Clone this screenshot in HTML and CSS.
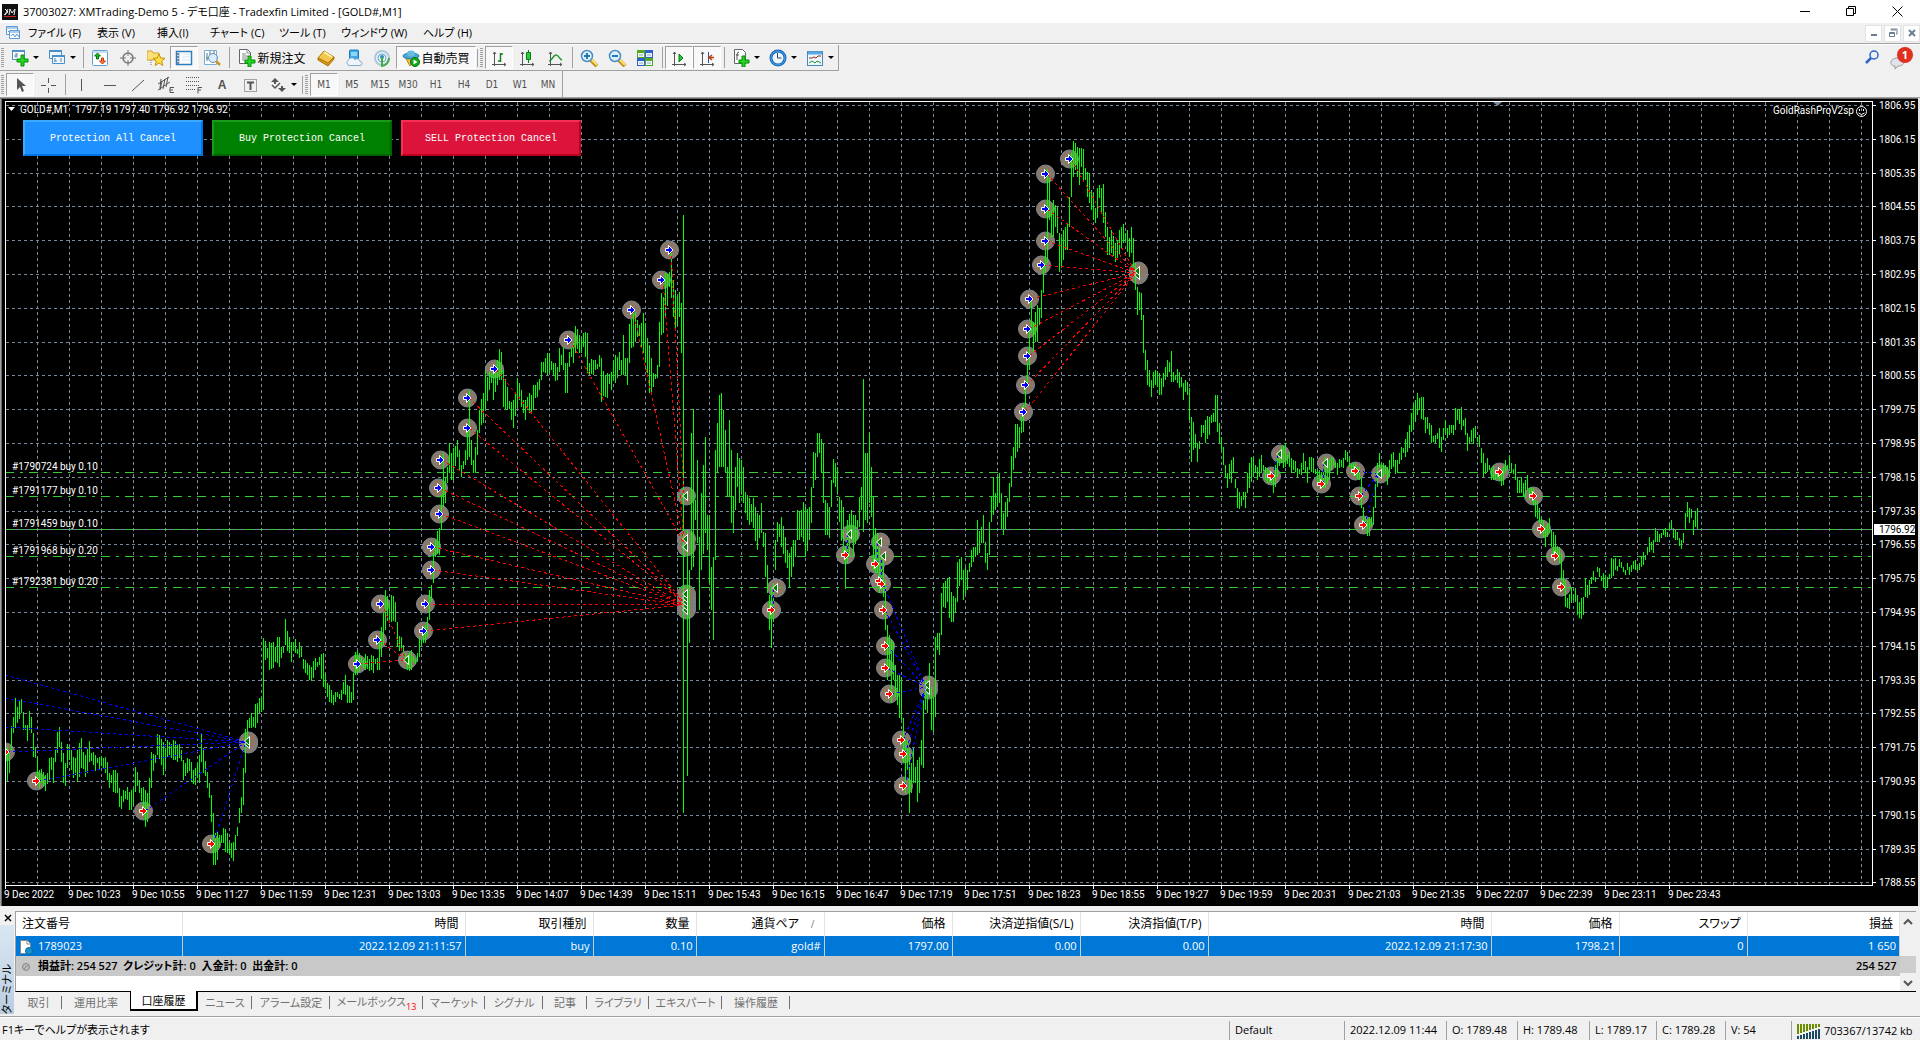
FILE: index.html
```html
<!DOCTYPE html>
<html lang="ja">
<head>
    <meta charset="UTF-8">
    <meta name="viewport" content="width=device-width, initial-scale=1.0">
    <title>37003027: XMTrading-Demo 5 - デモ口座 - Tradexfin Limited - [GOLD#,M1]</title>
    <link rel="stylesheet" href="styles.css">
</head>
<body>
    <header class="title-bar">
        <svg class="app-icon" width="16" height="16"><rect width="16" height="16" fill="#111"/><path d="M3 5l3 3-4 3M6 5L3 11M7 11l1-6 2 4 3-4-1 6" stroke="#eee" fill="none"/><path d="M2 12.500h12" stroke="#c22"/></svg>
        <h1>37003027: XMTrading-Demo 5 - デモ口座 - Tradexfin Limited - [GOLD#,M1]</h1>
        <div class="window-buttons">
            <button aria-label="最小化"><svg width="11" height="11"><path d="M0 5.500h10" stroke="#000"/></svg></button>
            <button aria-label="元に戻す"><svg width="11" height="11"><path d="M.5 2.500h7v7h-7zM2.500 2.500v-2h7v7h-2" stroke="#000" fill="none"/></svg></button>
            <button aria-label="閉じる"><svg width="11" height="11"><path d="M.5.5l10 10M10.500.5l-10 10" stroke="#000"/></svg></button>
        </div>
    </header>

    <nav class="menu-bar">
        <svg class="menu-icon" width="16" height="16" fill="#fff" stroke="#5b9bd5"><path d="M1.500 1.500h11v8h-11z"/><path d="M1 3h12M3 6l2 2 2-3" fill="none"/><path d="M4.500 5.500h10v8h-10z"/><path d="M5 7h9M6 11l2-2 2 3 2-3 2 3" fill="none"/></svg>
        <div class="menu-items">
            <button>ファイル (F)</button>
            <button>表示 (V)</button>
            <button>挿入(I)</button>
            <button>チャート (C)</button>
            <button>ツール (T)</button>
            <button>ウィンドウ (W)</button>
            <button>ヘルプ (H)</button>
        </div>
        <div class="mdi-buttons">
            <button aria-label="チャートを最小化"><svg width="10" height="10"><path d="M2 7h6" stroke="#6b7d90" stroke-width="2"/></svg></button>
            <button aria-label="チャートを元に戻す"><svg width="10" height="10" fill="none" stroke="#6b7d90"><path d="M3 2V1h6v5H8M3 2h5M1.500 4.500h5v4h-5zM1.500 5.500h5"/></svg></button>
            <button aria-label="チャートを閉じる"><svg width="10" height="10"><path d="M2 2l6 6M8 2L2 8" stroke="#6b7d90" stroke-width="2"/></svg></button>
        </div>
    </nav>

    <div class="toolbar-area">
        <div class="toolbar-rows">
            <div class="toolbar">
                <span class="handle"></span>
                <button class="tool drop" aria-label="新規チャート"><svg width="18" height="18"><path d="M1.500 1.500h12v9h-12z" fill="#fff" stroke="#4a90c8"/><path d="M1 2h13" stroke="#4a90c8" stroke-width="2"/><path d="M5 4v5M3 7h4M5 5h2" stroke="#68a" fill="none"/><path d="M10 6h3v4h4v3h-4v4h-3v-4H6v-3h4z" fill="#21d821" stroke="#088a08"/></svg></button>
                <button class="tool drop" aria-label="組表示"><svg width="18" height="18" fill="#eef6fd" stroke="#4a90c8"><path d="M1.500 1.500h12v8h-12z"/><path d="M1 2h13" stroke-width="2"/><path d="M4.500 6.500h12v8h-12z"/><path d="M4 7h13" stroke-width="2"/><path d="M7 9v4M6 12h3M13 9v4" stroke="#68a"/></svg></button>
                <span class="sep"></span>
                <button class="tool" aria-label="気配値表示"><svg width="18" height="18"><rect x="1.500" y="1.500" width="15" height="15" rx="1" fill="#fff" stroke="#5aa0d0"/><path d="M1 3h16" stroke="#8ec2e8"/><path d="M6.500 4l3 3h-2v3h-2V7h-2z" fill="#25b625" stroke="#07770b"/><path d="M11.500 15l-3-3h2V9h2v3h2z" fill="#ff783d" stroke="#c53b0b"/></svg></button>
                <button class="tool" aria-label="データウィンドウ"><svg width="18" height="18" fill="none" stroke="#777"><circle cx="9" cy="9" r="5" stroke-width="1.500"/><path d="M9 1v6M9 11v6M1 9h6M11 9h6"/></svg></button>
                <button class="tool" aria-label="ナビゲーター"><svg width="18" height="18"><path d="M0 2h5l1 2h6v7H0z" fill="#fbe078" stroke="#d0a42c"/><path d="M4 11v6" stroke="#777" stroke-dasharray="1 1"/><path d="M12 5l1.700 4 4.300.3-3.300 2.700 1.100 4.500L12 14l-3.800 2.500L9.300 12 6 9.300l4.300-.3z" fill="#ffdf45" stroke="#c79308"/></svg></button>
                <button class="tool pressed" aria-label="ターミナル"><svg width="18" height="18"><rect x="1.500" y="2.500" width="15" height="13" fill="#fff" stroke="#2f7cba" stroke-width="1.500"/><path d="M2 3h3v12H2z" fill="#bdd9f0"/><path d="M3 4v11" stroke="#333" stroke-dasharray="2 1"/><path d="M7 5h8M7 8h8M7 11h8" stroke="#d4e6f3"/></svg></button>
                <button class="tool" aria-label="ストラテジーテスター"><svg width="18" height="18"><path d="M1.500 1.500h12v14h-12z" fill="#fff" stroke="#78add5"/><path d="M4 4v8M7 2v4M11 2v4M3 9h2" stroke="#578"/><circle cx="10" cy="9" r="4.500" fill="#cfe9fbcc" stroke="#6292bd"/><path d="M13 12l4 4" stroke="#c99b24" stroke-width="2.500"/></svg></button>
                <span class="sep"></span>
                <button class="tool wide order"><svg width="18" height="18"><path d="M1.500.5h8l3 3v11h-11z" fill="#fff" stroke="#666"/><path d="M9 1v3h3M4 5h4M4 7h6M4 9h5M4 11h3" stroke="#888" fill="none"/><path d="M10 7h3v4h4v3h-4v4h-3v-4H7v-3h3z" fill="#21d821" stroke="#088a08"/></svg>新規注文</button>
                <button class="tool" aria-label="MetaEditor"><svg width="18" height="18"><path d="M1 9l6-7 10 6-6 8z" fill="#f4c64b" stroke="#a87508"/><path d="M1 9l10 5 6-6v2l-6 7-10-6z" fill="#d8951d" stroke="#a87508"/><path d="M7 3l8 5" stroke="#fff2ad" stroke-width="2"/></svg></button>
                <button class="tool" aria-label="MQL5.community"><svg width="18" height="18"><rect x="4.500" y="1" width="9" height="9" rx="1" fill="#39a9e9" stroke="#1c7db9"/><path d="M6 3h6v4H6z" fill="#8ed6f8"/><path d="M4 16.500a3 3 0 01-1-5 4 4 0 017-1 3 3 0 015 2 2 2 0 010 4z" fill="#edf6fd" stroke="#87a9c6"/></svg></button>
                <button class="tool" aria-label="シグナル"><svg width="18" height="18" fill="none"><circle cx="9" cy="9" r="7" stroke="#a9c9df" stroke-width="2"/><circle cx="9" cy="9" r="4" stroke="#58abd1"/><circle cx="9" cy="8" r="2" fill="#268bcc"/><path d="M9 8v9a8 8 0 007-8" stroke="#43ac46" stroke-width="2"/></svg></button>
                <button class="tool wide pressed"><svg width="18" height="18"><path d="M3 8h12l-7 9z" fill="#f3c436" stroke="#b58716"/><ellipse cx="9" cy="7" rx="8" ry="3" fill="#4ba6d7" stroke="#2c7ba6"/><ellipse cx="9" cy="4.500" rx="4" ry="3" fill="#68bce2"/><circle cx="13" cy="13" r="4.500" fill="#13a91b" stroke="#087410"/><path d="M11.500 10.500v5l4-2.500z" fill="#fff"/></svg>自動売買</button>
                <span class="handle next"></span>
                <button class="tool pressed" aria-label="バーチャート"><svg width="18" height="18" fill="none" stroke="#555"><path d="M4.500 3v14M2 15.500h14M3 5l1.500-2L6 5M14 14l2 1.500-2 1.500"/><path d="M10.500 4v9M8 12h2M11 5h2" stroke="#14821b" stroke-width="1.500"/></svg></button>
                <button class="tool" aria-label="ローソク足"><svg width="18" height="18" fill="none" stroke="#555"><path d="M4.500 3v14M2 15.500h14M3 5l1.500-2L6 5M14 14l2 1.500-2 1.500"/><path d="M10.500 1v13" stroke="#087a16"/><path d="M8.500 3.500h4v7h-4z" fill="#29ce35" stroke="#087a16"/></svg></button>
                <button class="tool" aria-label="ラインチャート"><svg width="18" height="18" fill="none" stroke="#555"><path d="M4.500 3v14M2 15.500h14M3 5l1.500-2L6 5M14 14l2 1.500-2 1.500"/><path d="M3 12c3 0 4-6 7-6 3 0 3 4 6 5" stroke="#269a31" stroke-width="1.500"/></svg></button>
                <span class="sep"></span>
                <button class="tool" aria-label="拡大"><svg width="18" height="18"><path d="M11 11l6 6" stroke="#bf8b1b" stroke-width="4"/><path d="M11 10l6 6" stroke="#ffe66e" stroke-width="2"/><circle cx="7" cy="7" r="5.500" fill="#daf1ff" stroke="#4a8cc4" stroke-width="1.500"/><path d="M4 7h6M7 4v6" stroke="#2877ac" stroke-width="2"/></svg></button>
                <button class="tool" aria-label="縮小"><svg width="18" height="18"><path d="M11 11l6 6" stroke="#bf8b1b" stroke-width="4"/><path d="M11 10l6 6" stroke="#ffe66e" stroke-width="2"/><circle cx="7" cy="7" r="5.500" fill="#daf1ff" stroke="#4a8cc4" stroke-width="1.500"/><path d="M4 7h6" stroke="#2877ac" stroke-width="2"/></svg></button>
                <button class="tool" aria-label="整列"><svg width="18" height="18"><path d="M1 1h8v8H1zM9 9h8v8H9z" fill="#55a91d"/><path d="M9 1h8v8H9zM1 9h8v8H1z" fill="#2c60d0"/><path d="M2 4h6v4H2zM10 4h6v4h-6zM2 12h6v4H2zM10 12h6v4h-6z" fill="#eef5ff"/><path d="M3 6h4M11 6h4M3 14h4M11 14h4" stroke="#8ab"/></svg></button>
                <span class="sep"></span>
                <button class="tool pressed" aria-label="自動スクロール"><svg width="18" height="18" fill="none" stroke="#555"><path d="M4.500 3v14M2 15.500h14M3 5l1.500-2L6 5M14 14l2 1.500-2 1.500"/><path d="M9 5v8l4-4z" fill="#1ec72b" stroke="#087a16"/></svg></button>
                <button class="tool pressed" aria-label="チャートシフト"><svg width="18" height="18" fill="none" stroke="#555"><path d="M4.500 3v14M2 15.500h14M3 5l1.500-2L6 5M14 14l2 1.500-2 1.500"/><path d="M10.500 3v11" stroke="#1d58a8"/><path d="M16 8.500h-4M14 6l-3 2.500 3 2.500" stroke="#c33e0d" stroke-width="1.500"/></svg></button>
                <span class="sep"></span>
                <button class="tool drop" aria-label="インディケータ"><svg width="18" height="18"><path d="M2.500.5h8l3 3v11h-11z" fill="#fff" stroke="#666"/><path d="M7 3q-2 0-2 3v5M4 6h3" stroke="#555" fill="none"/><path d="M10 7h3v4h4v3h-4v4h-3v-4H7v-3h3z" fill="#21d821" stroke="#088a08"/></svg></button>
                <button class="tool drop" aria-label="時間足設定"><svg width="18" height="18"><circle cx="9" cy="9" r="7" fill="#edf7ff" stroke="#1765b5" stroke-width="3"/><circle cx="9" cy="9" r="7" fill="none" stroke="#48a8ea"/><path d="M8.500 4v5h4" stroke="#345" fill="none"/></svg></button>
                <button class="tool drop" aria-label="定型チャート"><svg width="18" height="18"><rect x="1.500" y="2.500" width="15" height="14" fill="#eef7ff" stroke="#4887ba"/><path d="M2 4h14" stroke="#5ca7e1" stroke-width="3"/><path d="M3 9h3l2-1 2 1 2-2h3" stroke="#962e0a" fill="none"/><path d="M3 14l3-2 3 2 2-2 2 1 2 1" stroke="#279230" fill="none"/></svg></button>
            </div>
            <div class="toolbar drawing">
                <span class="handle"></span>
                <button class="tool pressed" aria-label="カーソル"><svg width="18" height="18"><path d="M6 2v12l3-3 2 5 2-1-2-5h4z" fill="#555"/></svg></button>
                <button class="tool" aria-label="クロスヘア"><svg width="18" height="18"><path d="M9.500 2v5M9.500 12v5M2 9.500h5M12 9.500h5" stroke="#555"/></svg></button>
                <span class="sep"></span>
                <button class="tool" aria-label="垂直線"><svg width="18" height="18"><path d="M8.500 3v12" stroke="#555"/></svg></button>
                <button class="tool" aria-label="水平線"><svg width="18" height="18"><path d="M3 9.500h12" stroke="#555"/></svg></button>
                <button class="tool" aria-label="トレンドライン"><svg width="18" height="18"><path d="M3 15L15 4" stroke="#555"/></svg></button>
                <button class="tool" aria-label="等間隔チャネル"><svg width="18" height="18" fill="none" stroke="#555"><path d="M1 8L12 1M1 14L13 6M5 5L3 14M8 3L6 13M11 1l-2 10M4 3l-1 9"/><path d="M17 11.500h-4v5h4M13 14h3"/></svg></button>
                <button class="tool" aria-label="フィボナッチ"><svg width="18" height="18" fill="none" stroke="#555"><path d="M1 1.500h14M1 5.500h14M1 9.500h14M1 13.500h9" stroke-dasharray="1 1"/><path d="M17 11.500h-4v6M13 14h3"/></svg></button>
                <button class="tool letter">A</button>
                <button class="tool" aria-label="テキストラベル"><svg width="18" height="18" fill="none" stroke="#555"><rect x="3.500" y="3.500" width="12" height="12" stroke-dasharray="1 1"/><path d="M6 6.500h7M9.500 6v8" stroke-width="2"/></svg></button>
                <button class="tool drop" aria-label="矢印"><svg width="18" height="18" fill="#555"><path d="M6 2l4 4H7v2H5V6H2zM13 16l-4-4h3v-2h2v2h3z"/><path d="M3 9l3 3 5-5" fill="none" stroke="#555" stroke-width="1.500"/></svg></button>
                <span class="handle next"></span>
                <button class="tool time pressed">M1</button>
                <button class="tool time">M5</button>
                <button class="tool time">M15</button>
                <button class="tool time">M30</button>
                <button class="tool time">H1</button>
                <button class="tool time">H4</button>
                <button class="tool time">D1</button>
                <button class="tool time">W1</button>
                <button class="tool time">MN</button>
            </div>
        </div>
        <div class="toolbar-right">
            <button aria-label="検索"><svg width="15" height="15" fill="none" stroke="#2c65c7"><circle cx="9" cy="5" r="4" stroke-width="1.500"/><path d="M6 8l-5 5" stroke-width="2.500"/></svg></button>
            <button class="notice" aria-label="通知"><svg width="16" height="14"><path d="M8 2c-9 0-9 8-3 8v3l3-3c8 0 8-8 0-8z" fill="#dfe3ea" stroke="#999"/></svg><span class="badge">1</span></button>
        </div>
    </div>

    <main class="chart">
        <svg id="chart" viewBox="0 98 1920 808" preserveAspectRatio="xMinYMin meet"></svg>
        <div class="chart-buttons">
            <button class="all">Protection All Cancel</button>
            <button class="buy">Buy Protection Cancel</button>
            <button class="sell">SELL Protection Cancel</button>
        </div>
    </main>

    <section class="terminal">
        <div class="terminal-side">
            <button aria-label="ターミナルを閉じる"><svg width="8" height="8"><path d="M1 1l6 6M7 1L1 7" stroke="#000" stroke-width="1.500"/></svg></button>
            <div class="terminal-name"><span>ターミナル</span></div>
        </div>
        <div class="terminal-main">
            <div class="history">
                <table>
                    <colgroup>
                        <col class="c-order"><col class="c-time"><col class="c-val"><col class="c-lot"><col class="c-val"><col class="c-val">
                        <col class="c-val"><col class="c-val"><col class="c-time"><col class="c-val"><col class="c-val"><col>
                    </colgroup>
                    <thead>
                        <tr>
                            <th>注文番号</th><th>時間</th><th>取引種別</th><th>数量</th><th>通貨ペア<span class="sort">/</span></th><th>価格</th>
                            <th>決済逆指値(S/L)</th><th>決済指値(T/P)</th><th>時間</th><th>価格</th><th>スワップ</th><th>損益</th>
                        </tr>
                    </thead>
                    <tbody>
                        <tr class="selected">
                            <td><svg width="14" height="16"><path d="M1.500 1.500h7l3 3v10h-10z" fill="#fff" stroke="#888"/><path d="M8 1v4h4" fill="none" stroke="#888"/><circle cx="10" cy="12" r="3.500" fill="#1992d1" stroke="#0a6699"/></svg>1789023</td>
                            <td>2022.12.09 21:11:57</td><td>buy</td><td>0.10</td><td>gold#</td><td>1797.00</td>
                            <td>0.00</td><td>0.00</td><td>2022.12.09 21:17:30</td><td>1798.21</td><td>0</td><td>1 650</td>
                        </tr>
                        <tr class="total">
                            <td colspan="11"><svg width="14" height="16"><circle cx="7" cy="8" r="3.500" fill="#bbb" stroke="#888"/><path d="M5 10l4-4" stroke="#888"/></svg>損益計: 254 527&nbsp; クレジット計: 0&nbsp; 入金計: 0&nbsp; 出金計: 0</td>
                            <td>254 527</td>
                        </tr>
                    </tbody>
                </table>
                <div class="scrollbar">
                    <svg width="10" height="8"><path d="M1 6l4-4 4 4" fill="none" stroke="#555" stroke-width="2"/></svg>
                    <div class="thumb"></div>
                    <svg width="10" height="8"><path d="M1 2l4 4 4-4" fill="none" stroke="#555" stroke-width="2"/></svg>
                </div>
            </div>
            <div class="tabs">
                <button>取引</button>
                <button>運用比率</button>
                <button class="active">口座履歴</button>
                <button>ニュース</button>
                <button>アラーム設定</button>
                <button>メールボックス<span class="count">13</span></button>
                <button>マーケット</button>
                <button>シグナル</button>
                <button>記事</button>
                <button>ライブラリ</button>
                <button>エキスパート</button>
                <button>操作履歴</button>
            </div>
        </div>
    </section>

    <footer class="status-bar">
        <span class="help">F1キーでヘルプが表示されます</span>
        <span>Default</span>
        <span>2022.12.09 11:44</span>
        <span>O: 1789.48</span>
        <span>H: 1789.48</span>
        <span>L: 1789.17</span>
        <span>C: 1789.28</span>
        <span>V: 54</span>
        <span class="net"><svg width="24" height="16"><path d="M1 1v10M4 1v9M7 1v8M10 1v7M13 1v6M16 1v5M19 1v4M22 1v3" stroke="#6b8e00" stroke-width="2"/><path d="M1 13v3M4 12v4M7 11v5M10 10v6M13 9v7M16 8v8M19 7v9M22 6v10" stroke="#1b4a63" stroke-width="2"/></svg>703367/13742 kb</span>
    </footer>

    <script src="chart.js"></script>
</body>
</html>
```
FILE: styles.css
```css
* {
    box-sizing: border-box;
}

body {
    margin: 0;
    height: 100vh;
    display: flex;
    flex-direction: column;
    overflow: hidden;
    background-color: #f0f0f0;
    color: #000;
    font-family: "Open Sans", "Noto Sans CJK JP", sans-serif;
    font-size: 11px;
    font-feature-settings: "palt";
}

button {
    margin: 0;
    padding: 0;
    border: none;
    background: none;
    color: inherit;
    font: inherit;
    font-feature-settings: inherit;
    white-space: nowrap;
}

svg {
    display: block;
    flex: none;
}

/* title and menu */
.title-bar {
    display: flex;
    align-items: center;
    height: 23px;
    padding-left: 2px;
    background-color: #fff;
}

.title-bar h1 {
    flex: 1;
    margin: 0 0 0 5px;
    font-size: 11px;
    font-weight: normal;
    line-height: 22px;
}

.window-buttons {
    display: flex;
}

.window-buttons button {
    display: flex;
    justify-content: center;
    align-items: center;
    width: 46px;
    height: 20px;
}

.menu-bar {
    display: flex;
    align-items: center;
    height: 21px;
    padding-left: 5px;
    border-bottom: 1px solid #a0a0a0;
}

.menu-items {
    display: grid;
    flex: 1;
    grid-template-columns: 69px 60px 53px 69px 62px 82px 60px;
    margin-left: 7px;
    font-size: 11px;
    line-height: 18px;
}

.menu-items button {
    text-align: left;
}

.mdi-buttons {
    display: flex;
    gap: 2px;
}

.mdi-buttons button {
    display: flex;
    justify-content: center;
    align-items: center;
    width: 17px;
    height: 17px;
    border: 1px solid #e3e3e3;
    background-color: #fff;
}

/* toolbars */
.toolbar-area {
    display: flex;
    justify-content: space-between;
    height: 54px;
    border-top: 1px solid #fff;
    border-bottom: 1px solid #a0a0a0;
}

.toolbar-rows {
    display: flex;
    flex-direction: column;
    align-items: flex-start;
}

.toolbar {
    display: flex;
    align-items: center;
    height: 26px;
    padding-left: 1px;
    border-right: 1px solid #a0a0a0;
    border-bottom: 1px solid #a0a0a0;
}

.toolbar.drawing {
    padding-top: 1px;
    border-bottom: none;
}

.handle {
    width: 3px;
    height: 20px;
    margin: 0 2px 0 0;
    background: repeating-linear-gradient(#a0a0a0 0 1px, #f0f0f0 1px 2px);
}

.handle.next {
    margin: 0 2px 0 4px;
    box-shadow: -4px 0 0 -1px #a0a0a0;
}

.sep {
    width: 1px;
    height: 21px;
    margin: 0 2px 0 3px;
    background-color: #a0a0a0;
}

.tool {
    display: flex;
    justify-content: center;
    align-items: center;
    width: 28px;
    height: 23px;
    border: 1px solid transparent;
    color: #505050;
}

.tool.drop {
    justify-content: flex-start;
    gap: 4px;
    width: 37px;
    padding-left: 4px;
}

.tool.drop::after {
    content: "";
    border: 3px solid transparent;
    border-top-color: #000;
    border-bottom: none;
}

.tool.wide {
    gap: 1px;
    width: 80px;
    color: #000;
    font-family: "Noto Sans CJK JP", sans-serif;
    font-size: 12px;
}

.tool.pressed {
    border-color: #a0a0a0 #fff #fff #a0a0a0;
    background-color: #f8f8f8;
}

.tool.letter {
    font-family: "Liberation Sans", sans-serif;
    font-size: 12px;
    font-weight: bold;
}

.tool.time {
    font-family: "DejaVu Sans Condensed", "DejaVu Sans", sans-serif;
    font-size: 10px;
}

.toolbar-right {
    display: flex;
    align-items: flex-start;
    gap: 10px;
    padding: 5px 7px 0 0;
}

.notice {
    position: relative;
    width: 23px;
    padding-top: 6px;
}

.badge {
    position: absolute;
    top: -3px;
    right: 0;
    width: 16px;
    height: 16px;
    border-radius: 8px;
    background-color: #e0301e;
    color: #fff;
    font-weight: bold;
    line-height: 16px;
}

/* chart */
.chart {
    position: relative;
    flex: 1;
    min-height: 0;
    background-color: #000;
    border-right: 2px solid #e3e3e3;
}

.chart svg {
    width: 100vw;
    height: 100%;
    font-family: "Roboto", sans-serif;
    font-size: 10px;
    fill: #fff;
}

.chart-buttons {
    position: absolute;
    top: 22px;
    left: 23px;
    display: flex;
    gap: 9px;
}

.chart-buttons button {
    width: 180px;
    height: 36px;
    border: 2px solid;
    color: #fff;
    font-family: "Liberation Mono", monospace;
    font-size: 10px;
}

.chart-buttons .all {
    background-color: #1e90ff;
    border-color: #3ba9ff #0074e6 #0074e6 #3ba9ff;
}

.chart-buttons .buy {
    background-color: #008000;
    border-color: #1b991b #006400 #006400 #1b991b;
}

.chart-buttons .sell {
    background-color: #dc143c;
    border-color: #f73055 #bd0020 #bd0020 #f73055;
}

/* terminal */
.terminal {
    display: flex;
    height: 111px;
    padding: 5px 4px 0 0;
    border-bottom: 1px solid #a0a0a0;
}

.terminal-side {
    display: flex;
    flex-direction: column;
    width: 15px;
}

.terminal-side button {
    display: flex;
    justify-content: center;
    align-items: center;
    height: 14px;
}

.terminal-name {
    display: flex;
    flex: 1;
    justify-content: center;
    align-items: flex-end;
    width: 14px;
    margin-bottom: 2px;
    background: linear-gradient(#d9e7f3, #b9cde0);
}

.terminal-name span {
    writing-mode: vertical-rl;
    text-orientation: sideways;
    transform: rotate(180deg);
    line-height: 14px;
}

.terminal-main {
    flex: 1;
    min-width: 0;
}

.history {
    display: flex;
    height: 81px;
    border-top: 1px solid #a0a0a0;
    border-left: 1px solid #a0a0a0;
    border-bottom: 1px solid #000;
    background-color: #fff;
}

.history table {
    flex: 1;
    width: 0;
    height: 64px;
    table-layout: fixed;
    border-collapse: collapse;
}

.c-order { width: 166px; }
.c-time { width: 283px; }
.c-val { width: 128px; }
.c-lot { width: 103px; }

.history th,
.history td {
    height: 20px;
    padding: 0 3px;
    text-align: right;
    line-height: 18px;
    white-space: nowrap;
}

.history th {
    height: 24px;
    padding-right: 6px;
    border-right: 1px solid #e3e3e3;
    font-size: 12px;
    font-weight: normal;
}

.history th:first-child {
    padding-left: 6px;
    text-align: left;
}

.history td:first-child {
    text-align: left;
}

.history td svg {
    display: inline-block;
    margin-right: 5px;
    vertical-align: middle;
}

.sort {
    margin: 0 3px 0 12px;
    color: #808080;
    font-size: 10px;
}

.selected {
    background-color: #0078d7;
    color: #fff;
}

.selected td {
    border-right: 1px solid #ccc;
}

.total {
    background-color: #c8c8c8;
    font-weight: 600;
}

.scrollbar {
    display: flex;
    flex-direction: column;
    justify-content: space-between;
    align-items: center;
    width: 16px;
    padding: 6px 0 4px;
    background-color: #f0f0f0;
}

.scrollbar .thumb {
    width: 16px;
    height: 17px;
    margin-top: 24px;
    background-color: #cdcdcd;
}

.tabs {
    display: grid;
    grid-template-columns: 47px 68px 68px 54px 78px 93px 62px 58px 44px 62px 73px 68px;
    color: #707070;
}

.tabs button {
    position: relative;
    height: 20px;
    line-height: 17px;
    vertical-align: top;
}

.tabs button::after {
    content: "";
    position: absolute;
    top: 4px;
    right: 0;
    height: 13px;
    border-right: 1px solid #707070;
}

.tabs button:nth-child(2)::after,
.tabs .active::after {
    display: none;
}

.tabs .active {
    margin-top: -1px;
    border: 1px solid #000;
    border-top: none;
    border-right-width: 2px;
    border-bottom-width: 2px;
    background-color: #fff;
    color: #000;
}

.tabs .count {
    position: relative;
    top: 4px;
    color: #f00;
    font-size: 9px;
}

/* status */
.status-bar {
    display: grid;
    grid-template-columns: 1fr 115px 102px 71px 72px 67px 69px 66px 129px;
    align-items: end;
    height: 23px;
    border-top: 1px solid #fff;
    line-height: 18px;
}

.status-bar span {
    height: 19px;
    padding-left: 5px;
    border-left: 1px solid #a0a0a0;
    white-space: nowrap;
}

.status-bar .help {
    padding-left: 2px;
    border-left: none;
}

.status-bar .net {
    display: flex;
    align-items: center;
    gap: 3px;
}
```
FILE: chart.js
```javascript
const NS = 'http://www.w3.org/2000/svg';
const chart = document.getElementById('chart');

// x, high, low of the price bars, gaps are filled in by drawBars()
const prices = `5,733,762 7,747,781 9,753,773 11,726,750 13,717,733 15,698,728 17,707,723 21,699,713 23,712,730 27,725,741
29,711,730 31,717,733 33,733,757 35,747,758 37,757,780 39,770,788 45,775,791 49,758,780 51,757,770 53,758,783
55,750,762 57,732,753 59,727,747 61,742,762 63,753,783 65,763,786 67,744,768 69,747,760 73,757,778 77,750,782
81,738,768 85,755,777 89,741,762 93,752,765 99,757,770 105,757,773 109,773,788 113,770,792 117,773,793 119,788,807
123,790,802 127,787,800 129,792,810 133,788,805 135,767,792 139,780,793 143,787,808 145,790,827 147,793,822 151,752,788
155,755,763 157,734,755 161,739,765 163,742,775 167,740,757 173,740,760 179,744,758 183,760,780 187,758,773 191,762,782
195,768,785 199,755,783 201,733,762 203,748,773 207,772,788 209,783,798 211,795,822 213,813,865 215,833,865 219,835,848
223,828,843 227,833,853 231,843,858 233,842,861 235,835,850 239,808,823 241,797,813 243,768,805 245,729,773 247,720,740
251,713,728 257,703,723 259,698,713 261,698,712 263,638,710 265,641,660 269,642,670 273,642,668 279,637,667 283,647,653
285,619,645 289,637,653 291,642,662 295,639,653 301,647,657 305,660,673 309,665,680 311,667,681 315,658,670 319,657,665
323,653,687 327,683,697 329,685,702 335,692,702 341,690,700 345,675,695 347,685,703 351,692,703 353,673,700 355,652,675
359,653,672 365,654,670 371,655,670 377,658,670 379,640,670 381,627,657 385,590,630 389,603,622 391,595,622 395,602,622
397,622,647 401,637,648 407,657,670 411,650,670 417,653,662 419,637,657 423,630,643 427,617,637 429,590,620 431,585,602
433,553,583 435,540,557 439,528,555 441,495,530 443,453,507 445,477,503 447,467,483 449,443,473 453,448,480 457,440,457
461,465,477 465,450,465 467,427,460 469,390,457 471,440,465 473,460,473 475,447,473 477,430,455 479,410,433 483,393,423
485,370,410 489,372,390 491,373,383 493,372,400 495,373,392 499,349,380 501,352,380 503,370,407 507,387,410 511,402,420
513,400,428 517,378,408 521,390,407 525,400,420 529,393,413 533,385,410 537,382,397 541,362,380 545,358,373 549,353,373
553,363,375 557,367,380 559,348,372 563,347,370 565,363,393 567,363,393 569,352,367 573,343,363 575,326,353 579,335,353
583,333,347 587,333,373 589,363,375 595,360,370 599,355,367 601,358,402 605,375,397 611,372,390 615,355,383 619,352,370
621,360,375 623,335,375 625,358,375 627,358,385 629,324,363 633,310,347 637,320,337 641,323,347 643,313,353 645,323,363
649,345,393 653,373,387 657,365,378 659,322,367 661,293,335 663,297,333 665,273,317 669,272,287 671,250,298 673,280,317
675,290,330 679,292,317 681,303,353 683,215,813 685,0,0 687,530,776 689,570,643 691,433,570 693,409,567 695,500,520
697,460,543 699,537,610 701,493,570 705,437,533 707,515,550 709,515,583 711,567,610 713,557,640 715,450,560 717,423,473
719,395,467 721,393,467 723,410,467 725,430,473 727,467,497 729,420,497 731,450,523 733,497,533 735,467,510 737,453,487
739,458,503 741,460,493 743,467,503 745,492,513 749,498,525 753,498,528 757,513,550 761,503,533 763,532,547 765,533,577
767,565,593 769,595,630 771,587,648 773,583,622 775,540,570 777,522,542 781,517,547 785,537,563 789,553,587 793,540,567
795,540,557 797,510,540 801,510,537 803,502,542 805,507,557 809,507,540 811,487,523 813,452,488 815,453,480 817,433,457
819,433,453 823,443,503 825,500,535 829,507,538 831,480,507 833,459,483 837,467,493 839,497,522 843,507,553 845,547,589
847,520,563 851,510,540 853,515,557 857,520,540 859,497,527 861,487,510 863,379,532 865,453,520 867,453,523 869,433,503
871,467,517 873,497,570 875,528,573 877,533,573 879,547,593 883,560,597 885,580,630 887,625,680 889,635,668 891,640,703
893,642,680 895,665,697 899,675,718 901,677,720 903,718,762 905,740,793 907,740,770 909,748,813 911,763,793 913,748,783
915,767,783 917,760,802 919,757,793 921,740,765 923,700,768 925,680,710 927,680,713 929,663,697 931,687,730 933,697,732
935,637,717 937,633,650 939,633,655 941,593,635 943,583,607 947,578,602 949,577,618 951,592,622 955,598,613 957,562,602
961,557,580 963,570,600 967,570,590 971,550,567 975,547,557 977,520,555 981,527,543 983,515,543 985,542,563 987,553,570
989,522,555 991,497,522 993,477,515 995,493,510 997,477,507 999,473,503 1001,493,530 1003,513,535 1005,502,530 1009,483,502
1011,456,487 1013,447,470 1015,424,458 1019,427,448 1021,417,433 1023,405,432 1025,383,407 1027,363,385 1029,330,370 1031,298,333
1033,322,352 1035,312,342 1037,305,342 1039,308,325 1041,290,318 1043,267,293 1045,250,273 1047,169,263 1049,178,220 1051,210,238
1053,200,237 1055,205,227 1057,207,233 1059,233,272 1061,237,268 1063,230,260 1065,227,250 1067,223,250 1069,197,227 1071,153,197
1073,141,177 1075,143,170 1077,147,177 1079,148,185 1081,148,167 1083,149,180 1085,168,180 1087,172,197 1089,173,203 1091,190,210
1093,193,220 1095,208,223 1097,188,218 1099,185,198 1103,184,223 1105,212,237 1107,227,255 1109,237,255 1111,230,253 1115,243,262
1117,240,258 1119,230,255 1123,224,243 1127,230,252 1129,238,257 1131,227,253 1133,238,267 1135,263,290 1137,287,315 1139,292,310
1141,293,320 1143,315,353 1145,350,370 1147,360,385 1149,370,387 1151,380,397 1153,372,388 1155,370,385 1159,373,395 1163,373,387
1167,360,377 1171,351,382 1173,372,382 1177,369,383 1181,377,387 1183,383,400 1187,382,395 1189,388,420 1191,417,462 1193,422,450
1197,443,462 1201,425,437 1205,420,443 1209,417,435 1211,415,423 1213,413,422 1215,395,422 1217,395,432 1219,423,443 1221,437,450
1223,447,465 1225,465,478 1227,473,488 1231,460,483 1233,457,473 1237,488,508 1239,492,509 1243,492,500 1245,492,508 1247,473,493
1249,463,488 1253,457,477 1257,467,480 1261,455,473 1265,467,480 1269,470,483 1273,473,493 1277,457,477 1281,447,463 1285,443,467
1289,452,467 1293,460,470 1297,468,477 1301,463,475 1303,453,470 1307,467,483 1309,457,470 1313,458,473 1317,470,483 1323,470,488
1325,457,488 1331,457,470 1337,463,475 1341,460,467 1345,450,460 1349,457,467 1353,463,475 1359,467,480 1361,477,508 1363,507,523
1367,520,536 1371,517,527 1373,507,525 1375,483,508 1377,463,487 1379,453,468 1383,463,477 1387,467,485 1389,460,477 1393,452,467
1397,460,472 1401,447,460 1405,439,457 1409,425,448 1411,413,432 1415,400,422 1417,393,415 1419,398,410 1423,397,420 1425,417,433
1429,423,435 1431,425,443 1435,435,443 1439,428,448 1441,437,452 1445,420,433 1449,425,435 1453,425,435 1455,408,430 1457,409,420
1461,407,430 1465,418,435 1467,433,451 1471,430,442 1475,426,438 1479,435,447 1481,448,463 1483,453,477 1487,458,472 1491,468,480
1495,470,480 1501,472,486 1503,467,485 1505,460,473 1509,455,468 1511,463,473 1515,464,480 1517,477,493 1521,477,493 1523,483,497
1527,475,490 1529,488,500 1533,488,505 1535,500,517 1539,508,523 1543,520,537 1545,527,547 1549,518,533 1551,530,547 1555,535,560
1559,547,563 1561,553,580 1563,570,590 1565,580,607 1567,598,608 1571,587,603 1575,588,602 1577,595,615 1581,598,619 1583,597,615
1585,578,597 1589,580,595 1593,571,580 1599,568,577 1603,573,588 1607,577,588 1611,558,578 1615,558,570 1621,562,568 1627,563,570
1631,565,572 1635,560,570 1639,563,570 1643,552,565 1647,547,555 1649,537,552 1653,540,553 1655,528,542 1661,533,538 1665,528,537
1669,525,530 1671,520,530 1675,530,540 1679,538,546 1683,533,543 1685,513,530 1687,502,517 1689,508,523 1691,509,518 1693,520,535
1695,511,527 1697,508,529`.split(/\s+/).map(p => p.split(',').map(Number));

const sells = [[440, 460], [438, 488], [439, 514], [431, 547], [431, 570], [425, 604], [423, 631], [380, 604], [377, 640],
    [357, 664], [467, 398], [467, 428], [494, 369], [568, 340], [631, 310], [661, 280], [669, 250], [1069, 159], [1045, 174],
    [1045, 209], [1045, 241], [1041, 265], [1029, 299], [1027, 329], [1027, 356], [1025, 385], [1023, 412]];
const buys = [[5, 752], [36, 781], [143, 811], [211, 844], [771, 610], [845, 555], [875, 564], [879, 581], [881, 584],
    [883, 610], [885, 646], [885, 668], [889, 694], [901, 740], [903, 754], [903, 786], [1271, 476], [1321, 484], [1355, 471],
    [1359, 496], [1363, 525], [1499, 472], [1533, 496], [1541, 529], [1555, 556], [1561, 587]];
const exits = [[407, 660], [248, 744], [248, 741], [686, 496], [686, 547], [686, 539], [686, 610], [686, 606], [686, 602],
    [686, 598], [686, 594], [776, 588], [850, 534], [880, 542], [884, 556], [928, 690], [928, 685], [1138, 275], [1138, 271],
    [1280, 454], [1326, 463], [1380, 474]];

function add(tag, attrs, text) {
    const el = document.createElementNS(NS, tag);
    for (const name in attrs) {
        el.setAttribute(name, attrs[name]);
    }
    if (text) {
        el.textContent = text;
    }
    chart.appendChild(el);
    return el;
}

function path(d, stroke, dash) {
    add('path', { d: d, stroke: stroke, fill: 'none', 'stroke-dasharray': dash || 'none', 'shape-rendering': 'crispEdges' });
}

function drawGrid() {
    let d = '';
    for (let x = 37; x < 1872; x += 32) {
        d += `M${x + 0.5} 102V885`;
    }
    for (let i = 0; i < 24; i++) {
        d += `M6 ${Math.round(105 + i * 33.8) + 0.5}H1872`;
    }
    path(d, '#778899', '3 3');
}

function drawBars() {
    let d = '';
    prices.forEach(([x, high, low], i) => {
        if (high) {
            d += `M${x + 0.5} ${high}V${low}`;
        }
        const next = prices[i + 1];
        if (!next) {
            return;
        }
        const steps = (next[0] - x) / 2;
        for (let s = 1; s < steps; s++) {
            const h = high + (next[1] - high) * s / steps + (x + s * 5) * 7 % 11 - 3;
            const l = low + (next[2] - low) * s / steps + (x + s * 3) * 5 % 13 - 8;
            d += `M${x + s * 2 + 0.5} ${Math.round(h)}V${Math.round(Math.max(l, h + 5))}`;
        }
    });
    path(d, '#00ff00');
}

function drawOrders() {
    path('M6 529.5H1872', '#778899');
    [[472, '#1790724 buy 0.10'], [496, '#1791177 buy 0.10'], [529, '#1791459 buy 0.10'],
        [556, '#1791968 buy 0.20'], [587, '#1792381 buy 0.20']].forEach(([y, label]) => {
        path(`M5 ${y + 0.5}H1872`, '#32cd32', '9 6 3 6');
        add('text', { x: 12, y: y - 2 }, label);
    });
}

function drawTrades() {
    const red = (list, x, y) => list.map(([sx, sy]) => path(`M${sx + 2} ${sy}L${x} ${y}`, '#ff0000', '3 3'));
    const blue = (list, x, y) => list.map(([sx, sy]) => path(`M${sx + 2} ${sy}L${x} ${y}`, '#0000ff', '3 3'));
    red(sells.slice(0, 7), 684, 605);
    red(sells.slice(7, 10), 406, 660);
    red(sells.slice(10, 13), 684, 603);
    red(sells.slice(13, 16), 684, 543);
    red(sells.slice(16, 17), 684, 496);
    red(sells.slice(17), 1136, 273);
    blue([[3, 675], [3, 698], [3, 727]].concat(buys.slice(0, 4)), 246, 742);
    blue(buys.slice(4, 5), 774, 588);
    blue(buys.slice(5, 6), 848, 534);
    blue(buys.slice(6, 7), 878, 542);
    blue(buys.slice(7, 8), 882, 556);
    blue(buys.slice(8, 16), 926, 687);
    blue(buys.slice(16, 17), 1278, 454);
    blue(buys.slice(17, 18), 1324, 463);
    blue(buys.slice(18, 21), 1378, 474);
}

function drawCircles() {
    sells.concat(buys, exits).forEach(([x, y]) => {
        add('circle', { cx: x + 0.5, cy: y, r: 9, fill: '#8b7765', stroke: '#778899' });
    });
}

function drawArrows() {
    const arrow = color => ([x, y]) => {
        add('path', { d: `M${x - 3.5} ${y - 1.5}h3v-3l4.5 4.5-4.5 4.5v-3h-3z`, fill: color, stroke: '#fff' });
    };
    sells.forEach(arrow('#0000ff'));
    buys.forEach(arrow('#ff0000'));
    exits.forEach(([x, y]) => {
        add('path', { d: `M${x + 1.5} ${y - 4.5}v9l-5-4.5z`, fill: '#008000', stroke: '#fff' });
    });
}

function drawAxes() {
    // blank the part of the first marker left of the frame
    add('rect', { x: 0, y: 98, width: 5, height: 800, fill: '#000' });
    path('M.5 98V906', '#a0a0a0');
    path('M1.5 98V906', '#696969');
    path('M0 98.5H1918', '#696969');
    path('M5 101.5H1872.5V885.5H5.5V101', '#fff');

    for (let i = 0; i < 24; i++) {
        const y = Math.round(105 + i * 33.8);
        path(`M1873 ${y + 0.5}h3`, '#fff');
        add('text', { x: 1879, y: y + 4 }, (1806.95 - i * 0.8).toFixed(2));
    }
    for (let i = 0; i < 27; i++) {
        const x = 5 + i * 64;
        const min = 623 + (i - 1) * 32;
        const time = Math.floor(min / 60) + ':' + String(min % 60).padStart(2, '0');
        path(`M${x + 0.5} 886v3`, '#fff');
        add('text', { x: x - 1, y: 898 }, i === 0 ? '9 Dec 2022' : '9 Dec ' + time);
    }

    add('rect', { x: 1874, y: 524, width: 41, height: 11 });
    add('text', { x: 1879, y: 533, style: 'fill: #000' }, '1796.92');
    add('path', { d: 'M1493 102h9l-4.500 4z', fill: '#778899' });
}

function drawTitle() {
    add('path', { d: 'M8 107h7l-3.500 4z' });
    add('text', { x: 20, y: 113 }, 'GOLD#,M1');
    add('text', { x: 75, y: 113 }, '1797.19 1797.40 1796.92 1796.92');
    add('text', { x: 1854, y: 114, 'text-anchor': 'end' }, 'GoldRashProV2sp');
    add('circle', { cx: 1861.5, cy: 111.5, r: 5, fill: 'none', stroke: '#fff' });
    add('path', { d: 'M1859.500 109v2M1863.500 109v2M1858.500 113q3 3 6 0', fill: 'none', stroke: '#fff' });
}

drawGrid();
drawCircles();
drawBars();
drawOrders();
drawTrades();
drawArrows();
drawAxes();
drawTitle();
```
